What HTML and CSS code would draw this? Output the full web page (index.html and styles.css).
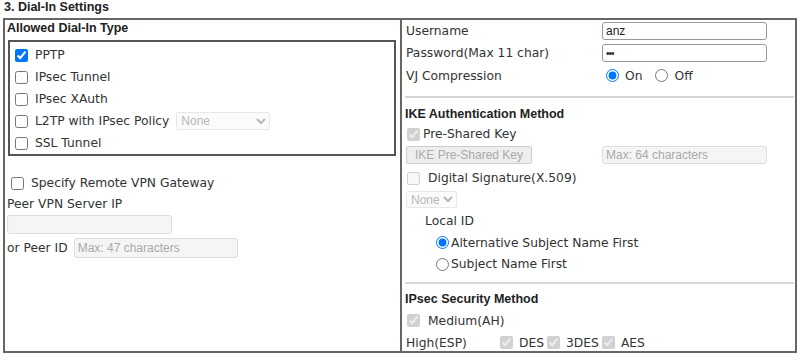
FILE: index.html
```html
<!DOCTYPE html>
<html lang="en">
<head>
  <meta charset="UTF-8">
  <title>Dial-In Settings</title>
  <link rel="stylesheet" href="styles.css">
</head>
<body>

  <div class="title">3. Dial-In Settings</div>

  <div class="panel">
    <div class="col left">
      <div class="head">Allowed Dial-In Type</div>

      <div class="typebox">
        <label class="trow"><input type="checkbox" checked> PPTP</label>
        <label class="trow"><input type="checkbox"> IPsec Tunnel</label>
        <label class="trow"><input type="checkbox"> IPsec XAuth</label>
        <label class="trow"><input type="checkbox"> L2TP with IPsec Policy
          <select class="sel policy" disabled><option>None</option></select>
        </label>
        <label class="trow"><input type="checkbox"> SSL Tunnel</label>
      </div>

      <label class="row gw"><input type="checkbox"> Specify Remote VPN Gateway</label>
      <div class="row plain">Peer VPN Server IP</div>
      <input class="txt peerip" type="text" disabled>
      <div class="row peerid">
        or Peer ID <input class="txt idbox" type="text" placeholder="Max: 47 characters" disabled>
      </div>
    </div>

    <div class="col right">
      <div class="frow r1">
        <span class="lbl">Username</span>
        <input class="txt field" type="text" value="anz">
      </div>
      <div class="frow r2">
        <span class="lbl">Password(Max 11 char)</span>
        <input class="txt field pass" type="password" value="abc">
      </div>
      <div class="frow r3">
        <span class="lbl">VJ Compression</span>
        <span class="radios">
          <label><input type="radio" name="vj" checked> On</label>
          <label><input type="radio" name="vj"> Off</label>
        </span>
      </div>

      <div class="sep"></div>

      <div class="head sub">IKE Authentication Method</div>
      <label class="crow psk"><input type="checkbox" checked disabled>Pre-Shared Key</label>
      <div class="frow keyrow">
        <button class="btn" disabled>IKE Pre-Shared Key</button>
        <input class="txt field" type="text" placeholder="Max: 64 characters" disabled>
      </div>
      <label class="crow sig"><input type="checkbox" disabled> Digital Signature(X.509)</label>
      <div class="selrow"><select class="sel small" disabled><option>None</option></select></div>
      <div class="crow localid">Local ID</div>
      <label class="crow idopt first"><input type="radio" name="lid" checked>Alternative Subject Name First</label>
      <label class="crow idopt"><input type="radio" name="lid">Subject Name First</label>

      <div class="sep low"></div>

      <div class="head sub">IPsec Security Method</div>
      <label class="crow medium"><input type="checkbox" checked disabled> Medium(AH)</label>
      <div class="crow high">
        <span class="hlbl">High(ESP)</span>
        <label class="alg"><input type="checkbox" checked disabled> DES</label>
        <label class="alg"><input type="checkbox" checked disabled> 3DES</label>
        <label class="alg"><input type="checkbox" checked disabled> AES</label>
      </div>
    </div>
  </div>

</body>
</html>
```

FILE: styles.css
```css
body {
  margin: 0;
  padding: 0 3px;
  font-family: "DejaVu Sans", Verdana, sans-serif;
  font-size: 12.3px;
  color: #333;
  background: #fff;
}
.title {
  height: 18px;
  line-height: 14px;
  padding-left: 1px;
  font-family: "Liberation Sans", Arial, sans-serif;
  font-weight: bold;
  font-size: 12.5px;
  color: #222;
}
.panel {
  display: grid;
  grid-template-columns: 397px 1fr;
  width: 794px;
  height: 335px;
  box-sizing: border-box;
  border: 2px solid #666;
}
.col.left {
  border-right: 2px solid #666;
}
.head {
  height: 20px;
  line-height: 17px;
  padding-left: 2px;
  font-family: "Liberation Sans", Arial, sans-serif;
  font-weight: bold;
  font-size: 12.5px;
  color: #222;
}
input[type="checkbox"],
input[type="radio"] {
  width: 13px;
  height: 13px;
  margin: 0;
}

/* allowed types box */
.typebox {
  margin: 0 4px 0 3px;
  height: 116px;
  box-sizing: border-box;
  border: 2px solid #555;
  padding: 2px 0 0 5px;
}
.trow {
  display: flex;
  align-items: center;
  gap: 7px;
  height: 22px;
}
.sel {
  font-family: "Liberation Sans", Arial, sans-serif;
  font-size: 12px;
  color: #999;
  background: #fafafa;
  border: 1px solid #ddd;
  border-radius: 2px;
}
.sel.policy {
  width: 94px;
  height: 18px;
}

.row {
  display: flex;
  align-items: center;
}
.row.gw {
  height: 20px;
  margin-top: 17px;
  padding-left: 6px;
  gap: 7px;
}
.row.plain {
  height: 20px;
  margin-top: 1px;
  padding-left: 2px;
}
.txt {
  box-sizing: border-box;
  font-family: "Liberation Sans", Arial, sans-serif;
  font-size: 12px;
  color: #222;
  padding: 0 3px;
  border: 1px solid #999;
  border-radius: 3px;
  background: #fff;
}
.txt:disabled {
  background: #f5f5f5;
  border-color: #ddd;
}
.txt::placeholder {
  color: #aaa;
}
.txt.peerip {
  display: block;
  width: 165px;
  height: 19px;
  margin: 1px 0 0 2px;
}
.row.peerid {
  height: 22px;
  margin-top: 3px;
  padding-left: 2px;
  gap: 6px;
}
.txt.idbox {
  width: 164px;
  height: 20px;
}

/* right column */
.col.right {
  padding-left: 2px;
}
.frow {
  display: flex;
  align-items: center;
  height: 22px;
}
.frow.r3 {
  height: 23px;
}
.lbl {
  width: 196px;
  padding-left: 2px;
}
.txt.field {
  width: 165px;
  height: 18px;
}
.txt.pass {
  font-size: 10px;
  letter-spacing: -1px;
}
.radios {
  display: flex;
  gap: 13px;
  padding-left: 4px;
}
.radios label {
  display: flex;
  align-items: center;
  gap: 6px;
}
.sep {
  margin: 9px 1px 7px 1px;
  border-top: 2px solid #d6d6d6;
}
.sep.low {
  margin: 7px 1px 6px 1px;
}
.head.sub {
  height: 18px;
  line-height: 18px;
  padding-left: 1px;
}
.crow {
  display: flex;
  align-items: center;
}
.crow.psk {
  height: 22px;
  padding-left: 3px;
  gap: 3px;
}
.frow.keyrow {
  height: 20px;
  padding-left: 2px;
}
.btn {
  width: 126px;
  height: 18px;
  margin-right: 70px;
  padding: 0;
  font-family: "Liberation Sans", Arial, sans-serif;
  font-size: 12px;
  color: #aaa;
  background: #eee;
  border: 1px solid #ccc;
  border-radius: 2px;
}
.crow.sig {
  height: 26px;
  padding-left: 3px;
  gap: 8px;
}
.selrow {
  height: 17px;
  padding-left: 2px;
}
.sel.small {
  width: 51px;
  height: 17px;
}
.crow.localid {
  height: 23px;
  margin-top: 1px;
  padding-left: 21px;
}
.crow.idopt {
  height: 22px;
  padding-left: 32px;
  gap: 2px;
}
.crow.idopt.first {
  height: 21px;
}
.crow.medium {
  height: 25px;
  padding-left: 3px;
  gap: 8px;
}
.crow.high {
  height: 19px;
}
.hlbl {
  width: 94px;
  padding-left: 2px;
}
.alg {
  display: flex;
  align-items: center;
  gap: 6px;
  margin-right: 3px;
}
```
